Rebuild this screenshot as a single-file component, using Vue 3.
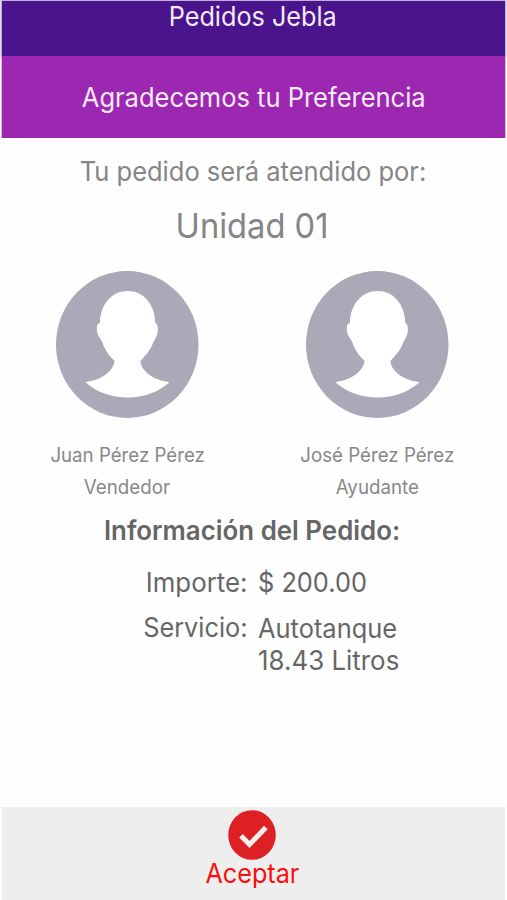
<script setup>
const people = [
  { name: 'Juan Pérez Pérez', role: 'Vendedor' },
  { name: 'José Pérez Pérez', role: 'Ayudante' },
]
</script>

<template>
  <main class="screen">
    <header class="titlebar"><h1 class="text">Pedidos Jebla</h1></header>
    <div class="banner"><span class="text">Agradecemos tu Preferencia</span></div>

    <section class="assigned">
      <p class="lead text">Tu pedido será atendido por:</p>
      <p class="unit text">Unidad 01</p>
    </section>

    <section class="people">
      <article v-for="person in people" :key="person.name" class="person">
        <svg class="avatar" viewBox="0 0 142 147" preserveAspectRatio="none" aria-hidden="true">
          <ellipse cx="71" cy="73.5" rx="71" ry="73.5" fill="#a9a9b8" />
          <path
            fill="#fff"
            d="M71.500 20C56 20 44 33 43.800 52C40.500 52.500 40 57 41.500 63C43 67 46 69.500 47.500 75C50 81 54 86 58.500 90C57 100 47 106 40 108.500C36 110 33 110 29.500 111.500C40 121 55 126.500 71.500 126.500C88 126.500 102 121 113 111.500C109 110 105 110 102 108.500C95 106 85 100 84 90C88 86 93 80 95.500 75C97 70 100 67 101 63C102 58 101.500 53 99 52C98.500 33 87 20 71.500 20Z"
          />
        </svg>
        <p class="name text">{{ person.name }}</p>
        <p class="role text">{{ person.role }}</p>
      </article>
    </section>

    <section class="order">
      <h2 class="text">Información del Pedido:</h2>
      <dl>
        <dt class="amount-label text">Importe:</dt>
        <dd class="amount text">$ 200.00</dd>
        <dt class="service-label text">Servicio:</dt>
        <dd class="service">
          <span class="kind text">Autotanque</span>
          <span class="liters text">18.43 Litros</span>
        </dd>
      </dl>
    </section>

    <button class="accept" type="button">
      <svg class="check" viewBox="0 0 48 50" preserveAspectRatio="none" aria-hidden="true">
        <ellipse cx="24" cy="25" rx="23.8" ry="24.8" fill="#dc2023" />
        <path d="M13 25.800L21.500 34.500L37.800 17.500" fill="none" stroke="#f4eeee" stroke-width="5" />
      </svg>
      <span class="text">Aceptar</span>
    </button>
  </main>
</template>

<style>
body {
  margin: 0;
  background: #fff;
}
</style>

<style scoped>
.screen {
  box-sizing: border-box;
  width: 507px;
  height: 900px;
  padding: 1px 1.5px 0 1.5px;
  display: flex;
  flex-direction: column;
  overflow: hidden;
  background: #fefefe;
  color: #666;
  font-family: Inter, Roboto, sans-serif;
  font-size: 26.5px;
  line-height: 32px;
}
h1, h2, p, dl, dd {
  margin: 0;
  font-size: inherit;
  font-weight: 400;
}
.text {
  display: block;
  white-space: nowrap;
  transform: scaleX(0.962);
}
.titlebar, .banner, .accept {
  margin-right: 0.5px;
}
.titlebar {
  box-sizing: border-box;
  height: 55px;
  flex: none;
  padding-right: 2px;
  background: #4a148c;
  box-shadow: 0 0 0 1.5px #c0b0da;
  color: #f4eafa;
  line-height: 31px;
  text-align: center;
}
.titlebar .text {
  transform: scaleX(0.952);
}
.banner {
  box-sizing: border-box;
  display: flex;
  flex: none;
  align-items: center;
  justify-content: center;
  height: 81.5px;
  padding-top: 1px;
  background: #9c27b0;
  box-shadow: 1px 0 #deb6e4, -1px 0 #deb6e4;
  color: #faeafa;
}
.assigned {
  padding: 17px 2px 0 0;
  color: #858585;
  text-align: center;
}
.unit {
  margin-top: 18px;
  padding-right: 2px;
  font-size: 34px;
  line-height: 42px;
  transform: scaleX(0.96);
}
.people {
  display: flex;
  padding-top: 24.5px;
  color: #888;
  font-size: 19.5px;
}
.person {
  display: flex;
  flex-direction: column;
  align-items: center;
  width: 250px;
  margin-left: 1px;
}
.person + .person {
  margin-left: 0;
}
.avatar {
  display: block;
  width: 142.5px;
  height: 147px;
  margin-bottom: 21px;
}
.name {
  transform: scaleX(0.958);
}
.role {
  padding-right: 1px;
}
.order {
  padding-top: 10.5px;
}
.order h2 {
  padding-right: 4px;
  font-weight: 600;
  text-align: center;
  transform: scaleX(0.976);
}
.order dl {
  display: grid;
  grid-template-columns: 245.5px 1fr;
  column-gap: 11px;
  row-gap: 13px;
  margin-top: 20px;
}
.order dt {
  text-align: right;
  transform-origin: right center;
}
.order dd {
  transform-origin: left center;
}
.service {
  padding-top: 1px;
}
.service .text {
  transform-origin: left center;
}
.amount-label {
  transform: scaleX(0.975);
}
.amount {
  transform: scaleX(0.957);
}
.service-label {
  transform: scaleX(0.955);
}
.service .kind {
  transform: scaleX(0.96);
}
.service .liters {
  transform: scaleX(0.977);
}
.accept {
  display: flex;
  flex: none;
  flex-direction: column;
  align-items: center;
  height: 93px;
  margin-top: auto;
  padding: 3px 2px 0 0;
  border: 0;
  background: #eee;
  color: #fb0d0d;
  font: inherit;
}
.check {
  display: block;
  flex: none;
  width: 48px;
  height: 50px;
}
.accept .text {
  margin-top: -3px;
  transform: scaleX(0.95);
}
</style>
